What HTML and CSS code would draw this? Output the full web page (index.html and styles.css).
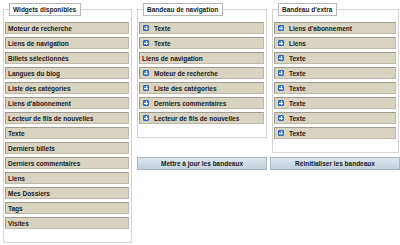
FILE: index.html
```html
<!DOCTYPE html>
<html lang="fr">
<head>
    <meta charset="UTF-8">
    <title>Widgets</title>
    <link rel="stylesheet" href="styles.css">
</head>
<body>
    <div class="widgets-page">
        <fieldset class="widget-box available">
            <legend>Widgets disponibles</legend>
            <div class="widget">Moteur de recherche</div>
            <div class="widget">Liens de navigation</div>
            <div class="widget">Billets sélectionnés</div>
            <div class="widget">Langues du blog</div>
            <div class="widget">Liste des catégories</div>
            <div class="widget">Liens d'abonnement</div>
            <div class="widget">Lecteur de fils de nouvelles</div>
            <div class="widget">Texte</div>
            <div class="widget">Derniers billets</div>
            <div class="widget">Derniers commentaires</div>
            <div class="widget">Liens</div>
            <div class="widget">Mes Dossiers</div>
            <div class="widget">Tags</div>
            <div class="widget">Visites</div>
        </fieldset>

        <div class="bars">
            <div class="bar-row">
                <fieldset class="widget-box nav-bar">
                    <legend>Bandeau de navigation</legend>
                    <div class="widget"><span class="plus"></span>Texte</div>
                    <div class="widget"><span class="plus"></span>Texte</div>
                    <div class="widget">Liens de navigation</div>
                    <div class="widget"><span class="plus"></span>Moteur de recherche</div>
                    <div class="widget"><span class="plus"></span>Liste des catégories</div>
                    <div class="widget"><span class="plus"></span>Derniers commentaires</div>
                    <div class="widget"><span class="plus"></span>Lecteur de fils de nouvelles</div>
                </fieldset>
                <fieldset class="widget-box extra-bar">
                    <legend>Bandeau d'extra</legend>
                    <div class="widget"><span class="plus"></span>Liens d'abonnement</div>
                    <div class="widget"><span class="plus"></span>Liens</div>
                    <div class="widget"><span class="plus"></span>Texte</div>
                    <div class="widget"><span class="plus"></span>Texte</div>
                    <div class="widget"><span class="plus"></span>Texte</div>
                    <div class="widget"><span class="plus"></span>Texte</div>
                    <div class="widget"><span class="plus"></span>Texte</div>
                    <div class="widget"><span class="plus"></span>Texte</div>
                </fieldset>
            </div>
            <div class="actions">
                <button>Mettre à jour les bandeaux</button>
                <button>Réinitialiser les bandeaux</button>
            </div>
        </div>
    </div>
</body>
</html>
```

FILE: styles.css
```css
/* widgets page */
body {
    margin: 0;
    background-color: #ffffff;
    font-family: "Liberation Sans", Arial, sans-serif;
    font-size: 6.5px;
    font-weight: bold;
    color: #1a1a1a;
}

.widgets-page {
    display: flex;
    gap: 5px;
    padding: 3px 0 0 3px;
}

.widget-box {
    margin: 0;
    padding: 6px 2px 13px 1px;
    width: 130px;
    box-sizing: border-box;
    border: 1px solid #d4d4d4;
    display: flex;
    flex-direction: column;
    gap: 3px;
}

.widget-box legend {
    margin-left: 4px;
    padding: 2px 4px 2px 3px;
    border: 1px solid #b8b8b8;
    background-color: #ffffff;
    line-height: 7px;
}

.available {
    height: 240px;
}

.bars {
    display: flex;
    flex-direction: column;
    gap: 4px;
}

.bar-row {
    display: flex;
    gap: 5px;
    align-items: flex-start;
}

.extra-bar {
    width: 127px;
}

.widget {
    height: 12px;
    box-sizing: border-box;
    padding: 0 2px;
    display: flex;
    align-items: center;
    background-color: #d9d4c2;
    border: 1px solid #9f9b90;
    border-right-color: #bdb9ad;
    border-bottom-color: #bdb9ad;
    white-space: nowrap;
}

.plus {
    width: 6px;
    height: 6px;
    margin: 0 5px 0 1px;
    background-color: #4a82d4;
    border: 1px solid #2f63b4;
    border-radius: 1px;
    box-sizing: border-box;
    position: relative;
}

.plus::before,
.plus::after {
    content: "";
    position: absolute;
    background-color: #ffffff;
}

.plus::before {
    left: 0;
    top: 1.5px;
    width: 4px;
    height: 1px;
}

.plus::after {
    left: 1.5px;
    top: 0;
    width: 1px;
    height: 4px;
}

.actions {
    display: flex;
    gap: 3px;
}

.actions button {
    width: 130px;
    height: 13px;
    padding: 0;
    font-family: "Liberation Sans", Arial, sans-serif;
    font-size: 6.5px;
    font-weight: bold;
    color: #1a1a1a;
    background: linear-gradient(#dde6ee, #c3d1dd);
    border: 1px solid #a9b5c0;
}
```
